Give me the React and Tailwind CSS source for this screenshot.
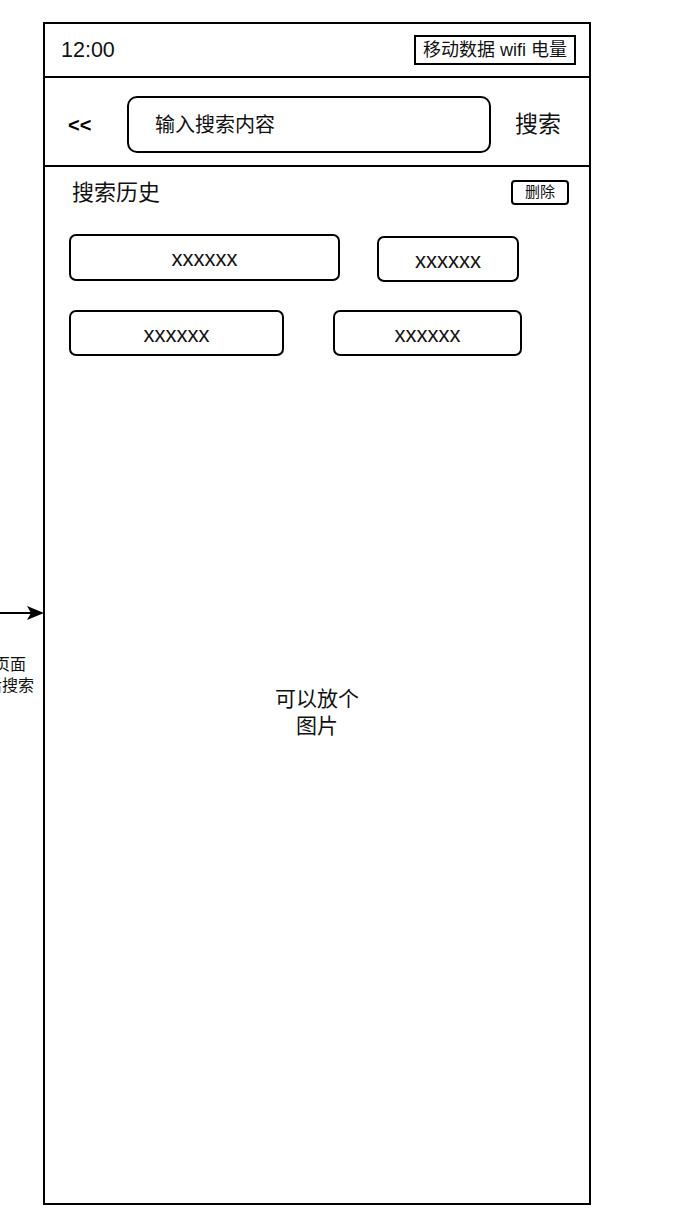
import React from 'react';

const font = { fontFamily: '"Liberation Sans", "Noto Sans CJK SC", sans-serif' };

const Tag = ({ className }) => (
  <div className={`flex items-center justify-center border-2 border-black rounded-[7px] text-[22px] text-[#111] pt-[2px] ${className}`}>
    xxxxxx
  </div>
);

const App = () => {
  return (
    <div className="relative w-[677px] h-[1229px] bg-white overflow-hidden text-black" style={font}>
      {/* annotation on the canvas, left of the phone */}
      <svg className="absolute left-0 top-[605px]" width="44" height="16" viewBox="0 0 44 16">
        <line x1="0" y1="8" x2="32" y2="8" stroke="black" strokeWidth="2" />
        <polygon points="44,8 27,1 31,8 27,15" fill="black" />
      </svg>
      <div className="absolute left-[-46px] top-[654px] w-[80px] text-center text-[16px] leading-[21px] text-[#111]">
        <div>跳转页面</div>
        <div>点击后搜索</div>
      </div>

      {/* phone frame */}
      <div className="ml-[43px] mt-[22px] w-[548px] h-[1183px] border-2 border-black flex flex-col">
        {/* status bar */}
        <div className="h-[54px] border-b-2 border-black flex items-center justify-between pl-[16px] pr-[13px]">
          <span className="text-[21.5px] text-[#111]">12:00</span>
          <div className="h-[30px] w-[162px] border-2 border-black flex items-center justify-center text-[18px] text-[#111] whitespace-nowrap">
            移动数据 wifi 电量
          </div>
        </div>

        {/* search header */}
        <div className="h-[89px] border-b-2 border-black flex items-center pt-[6px]">
          <div className="w-[82px] pl-[23px] text-[20px] font-bold">&lt;&lt;</div>
          <div className="w-[364px] h-[57px] border-2 border-black rounded-[10px] flex items-center pl-[26px] text-[20px] text-[#111]">
            输入搜索内容
          </div>
          <div className="ml-[24px] text-[23px] text-[#111]">搜索</div>
        </div>

        {/* history */}
        <div className="flex items-center justify-between pl-[27px] pr-[20px] pt-[9px]">
          <span className="text-[22px] text-[#111]">搜索历史</span>
          <div className="h-[25px] w-[58px] border-2 border-black rounded-[4px] flex items-center justify-center text-[15px] text-[#111]">
            删除
          </div>
        </div>

        <div className="flex items-start pl-[24px] mt-[25px]">
          <Tag className="w-[271px] h-[47px]" />
          <Tag className="w-[142px] ml-[37px] mt-[2px] h-[46px]" />
        </div>
        <div className="flex items-start pl-[24px] mt-[28px]">
          <Tag className="w-[215px] h-[46px]" />
          <Tag className="w-[189px] ml-[49px] h-[46px]" />
        </div>

        {/* placeholder image */}
        <div className="mt-[329px] text-center text-[21px] leading-[27px] text-[#111]">
          <div>可以放个</div>
          <div>图片</div>
        </div>
      </div>
    </div>
  );
};

export default App;
